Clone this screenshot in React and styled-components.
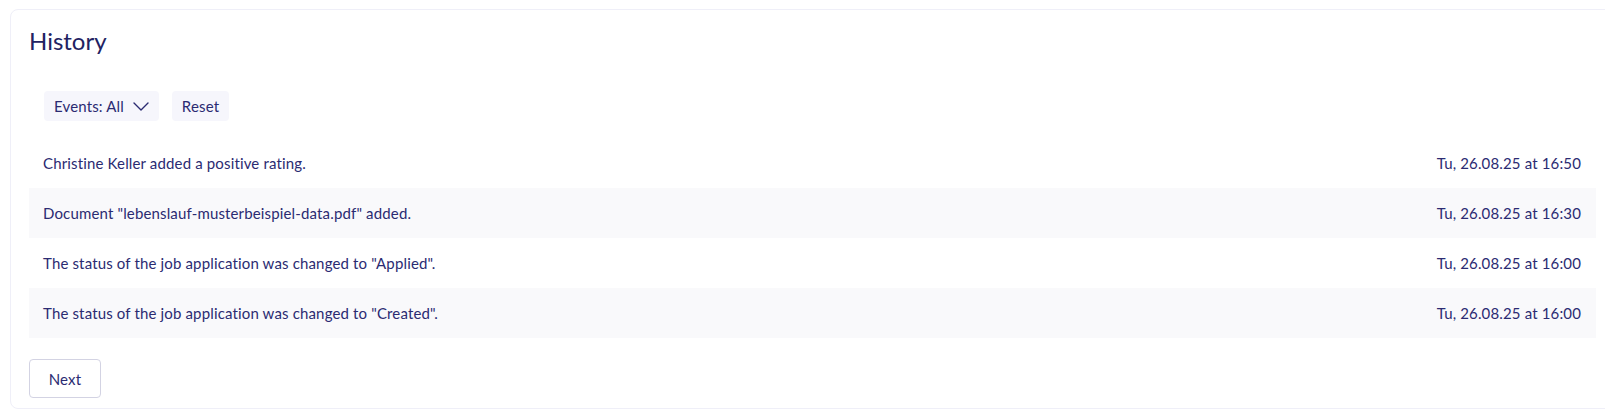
import styled, { createGlobalStyle } from 'styled-components';

const GlobalStyle = createGlobalStyle`
  html, body {
    margin: 0;
    padding: 0;
    background: #ffffff;
    overflow: hidden;
  }
  body {
    font-family: Lato, 'Noto Sans', sans-serif;
    color: #27276b;
  }
`;

const events = [
  { text: 'Christine Keller added a positive rating.', date: 'Tu, 26.08.25 at 16:50' },
  { text: 'Document "lebenslauf-musterbeispiel-data.pdf" added.', date: 'Tu, 26.08.25 at 16:30' },
  { text: 'The status of the job application was changed to "Applied".', date: 'Tu, 26.08.25 at 16:00' },
  { text: 'The status of the job application was changed to "Created".', date: 'Tu, 26.08.25 at 16:00' },
];

export default function App() {
  return (
    <Page>
      <GlobalStyle />
      <Card>
        <Title>History</Title>
        <Filters>
          <FilterButton>
            Events: All
            <svg width='16' height='9' viewBox='0 0 16 9' fill='none'>
              <path d='M1 1l7 7 7-7' stroke='#2b2b72' strokeWidth='1.4' strokeLinecap='round' strokeLinejoin='round' />
            </svg>
          </FilterButton>
          <FilterButton>Reset</FilterButton>
        </Filters>
        <List>
          {events.map((item, i) => (
            <Row key={i} striped={i % 2 === 1}>
              <span>{item.text}</span>
              <span>{item.date}</span>
            </Row>
          ))}
        </List>
        <NextButton>Next</NextButton>
      </Card>
    </Page>
  );
}

const Page = styled.div`
  padding: 9px 0 0 10px;
  width: 1605px;
  box-sizing: border-box;
`;

const Card = styled.section`
  width: 1605px;
  box-sizing: border-box;
  border: 1px solid #efeff8;
  border-radius: 8px;
  padding: 16px 18px 10px;
`;

const Title = styled.h2`
  margin: 0;
  font-size: 24px;
  font-weight: 400;
  line-height: 29px;
  color: #222262;
`;

const Filters = styled.div`
  display: flex;
  gap: 13px;
  margin: 36px 0 17px 15px;
`;

const FilterButton = styled.button`
  display: flex;
  align-items: center;
  gap: 9px;
  height: 30px;
  padding: 0 10px;
  border: none;
  border-radius: 4px;
  background: #f6f6fc;
  font-family: inherit;
  font-size: 15px;
  letter-spacing: 0.15px;
  color: #2b2b72;
  cursor: pointer;
`;

const List = styled.div`
  display: flex;
  flex-direction: column;
`;

const Row = styled.div`
  display: flex;
  justify-content: space-between;
  align-items: center;
  height: 50px;
  padding: 0 15px 0 14px;
  background: ${(props) => (props.striped ? '#f9f9fb' : 'transparent')};
  font-size: 15px;
  letter-spacing: 0.15px;
  color: #2b2b72;
`;

const NextButton = styled.button`
  margin-top: 21px;
  width: 72px;
  height: 39px;
  border: 1px solid #d3d3e3;
  border-radius: 4px;
  background: #ffffff;
  font-family: inherit;
  font-size: 15px;
  letter-spacing: 0.15px;
  color: #2b2b72;
  cursor: pointer;
`;
